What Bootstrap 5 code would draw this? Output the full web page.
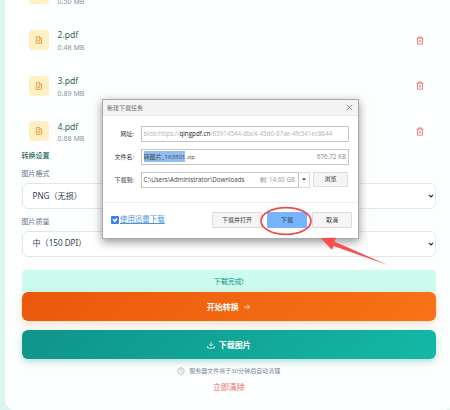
<!DOCTYPE html>
<html lang="zh-CN">
<head>
<meta charset="utf-8">
<meta name="viewport" content="width=device-width, initial-scale=1">
<title>PDF 转图片</title>
<link rel="stylesheet" href="https://cdn.jsdelivr.net/npm/bootstrap@5.3.0/dist/css/bootstrap.min.css">
<style>
html,body{height:410px;overflow:hidden}
body{background:#dcf5f0;font-family:"Noto Sans","Noto Sans CJK SC",sans-serif;font-size:8px;line-height:1;color:#334155}
.panel{margin-left:5px;width:455px;height:410px;background:#fdfffe;border-radius:0 0 18px 10px;padding:0 24px 0 16.5px;overflow:hidden}
.files{height:154px;justify-content:flex-end}
.file-row{height:45.6px;flex:none;padding:0 12px 0 7.5px}
.file-ico{width:20px;height:20px;border-radius:4px;background:#fef0c3}
.file-text{margin-left:8.5px;padding-top:1.4px}
.file-name{font-size:8.6px;line-height:12px;color:#315f5a}
.file-size{font-size:7.1px;line-height:10px;color:#8792a8;margin-top:.6px}
.head{height:4px;font-size:7px;font-weight:500;color:#27685f;line-height:4px}
.lbl{font-size:7px;color:#64748b;line-height:10px}
.form-select.pick{height:26px;border:1px solid #dfe7f1;border-radius:6px;background:#fff;padding:0 1px 0 10px;font-size:8.1px;color:#334155}
.done{height:22px;background:#ccfbf0;border-radius:4px 4px 0 0;color:#14927f;font-size:7px}
.btn.act{--bs-btn-color:#fff;height:29px;border:0;border-radius:6px;padding:0;font-size:8px;font-weight:700;color:#fff}
.go{background:linear-gradient(135deg,#ea580c,#f97316);box-shadow:0 3px 9px rgba(249,115,22,.25)}
.get{background:linear-gradient(135deg,#0f9488,#14b8a6);box-shadow:0 3px 7px rgba(20,150,136,.3)}
.note{font-size:6px;color:#7c879c}
.clear{font-size:8px;color:#f26b6b}
.dlg{left:102px;top:99px;width:257px;height:140px;background:#fff;border:1px solid #a9abac;box-shadow:0 3px 9px rgba(0,0,0,.42);font-family:"Open Sans","Noto Sans CJK SC",sans-serif;font-size:6.3px;color:#444}
.dlg-top{height:16px;background:#f4f4f4;border-bottom:1px solid #eaeaea;padding:0 5px 0 4px;color:#666;font-size:6px}
.dlg-body{height:87px;padding:10px 9px 0 0;border-bottom:1px solid #ececec}
.dlg-line{height:15.5px;margin-bottom:7.5px}
.cap{width:31px;margin-right:6.5px;text-align:right;font-size:6px;white-space:nowrap;color:#333}
.fld{height:15.5px;border:1px solid #c6c6c6;padding:0 2px;white-space:nowrap}
.sel{background:#8fbdf4;padding:1px 0}
.btn.mini{height:16px;border:1px solid #dcdcdc;border-radius:1px;background:#f5f5f5;padding:0;font-size:6px;color:#333}
.btn.mini.main{background:#78b4fd;border-color:#78b4fd}
.drop{width:10.5px;height:15.5px;border:1px solid #ddd;border-left:0}
.dlg-foot{height:34px;padding:0 6px 0 8px}
.thunder{color:#4a96d9;text-decoration:underline;font-size:7.45px;margin-left:1px}
.marks{left:0;top:0;pointer-events:none}
</style>
<script src="https://cdn.jsdelivr.net/npm/bootstrap@5.3.0/dist/js/bootstrap.bundle.min.js"></script>
</head>
<body class="position-relative">
<svg class="d-none">
 <symbol id="doc" viewBox="0 0 8 8"><path d="M1.3.6h3.3l2 2v4.8H1.3zM4.5.7v2.1h2M2.6 4.2h2.7M2.6 5.7h2.7M2.6 2.7h.8" fill="none" stroke="#e19432" stroke-width=".8" stroke-linejoin="round"/></symbol>
 <symbol id="bin" viewBox="0 0 8 9"><path d="M.5 2.2h7M2.6 2.2V.9h2.8v1.3M1.5 2.2v6h5v-6M3.3 4.2v2.2M4.7 4.2v2.2" fill="none" stroke="#f37575" stroke-width=".9" stroke-linejoin="round"/></symbol>
 <symbol id="chev" viewBox="0 0 6 4"><path d="M1 .9l2 2 2-2" fill="none" stroke="#222" stroke-width="1.1"/></symbol>
</svg>

<main class="panel">
 <section class="files d-flex flex-column">
  <div class="file-row d-flex align-items-center"><span class="file-ico d-flex align-items-center justify-content-center"><svg width="8" height="8"><use href="#doc"/></svg></span><div class="file-text flex-grow-1"><div class="file-name">1.pdf</div><div class="file-size">0.50 MB</div></div><svg width="8" height="9"><use href="#bin"/></svg></div>
  <div class="file-row d-flex align-items-center"><span class="file-ico d-flex align-items-center justify-content-center"><svg width="8" height="8"><use href="#doc"/></svg></span><div class="file-text flex-grow-1"><div class="file-name">2.pdf</div><div class="file-size">0.48 MB</div></div><svg width="8" height="9"><use href="#bin"/></svg></div>
  <div class="file-row d-flex align-items-center"><span class="file-ico d-flex align-items-center justify-content-center"><svg width="8" height="8"><use href="#doc"/></svg></span><div class="file-text flex-grow-1"><div class="file-name">3.pdf</div><div class="file-size">0.89 MB</div></div><svg width="8" height="9"><use href="#bin"/></svg></div>
  <div class="file-row d-flex align-items-center"><span class="file-ico d-flex align-items-center justify-content-center"><svg width="8" height="8"><use href="#doc"/></svg></span><div class="file-text flex-grow-1"><div class="file-name">4.pdf</div><div class="file-size">0.68 MB</div></div><svg width="8" height="9"><use href="#bin"/></svg></div>
 </section>
 <div class="head">转换设置</div>
 <div class="lbl" style="margin:11px 0 4px">图片格式</div>
 <div class="form-select pick d-flex align-items-center justify-content-between"><span>PNG（无损）</span><svg width="6" height="4"><use href="#chev"/></svg></div>
 <div class="lbl" style="margin:7.5px 0 4px">图片质量</div>
 <div class="form-select pick d-flex align-items-center justify-content-between"><span>中（150 DPI）</span><svg width="6" height="4"><use href="#chev"/></svg></div>
 <div class="done d-flex align-items-center justify-content-center" style="margin-top:13.5px">下载完成!</div>
 <button class="btn act go w-100 d-flex align-items-center justify-content-center">开始转换<svg class="ms-1" width="8" height="8" viewBox="0 0 8 8"><path d="M1 4h5.5M4.3 1.7L6.6 4 4.3 6.3" fill="none" stroke="#fff" stroke-width=".8"/></svg></button>
 <button class="btn act get w-100 d-flex align-items-center justify-content-center" style="margin-top:9px"><svg class="me-1" width="8" height="8" viewBox="0 0 8 8"><path d="M4 .7v4M2.3 3.2L4 4.9l1.7-1.7M.7 4.9v2.2h6.6V4.9" fill="none" stroke="#fff" stroke-width=".75"/></svg>下载图片</button>
 <div class="note d-flex align-items-center justify-content-center" style="margin-top:7px;height:9px"><svg class="me-1" width="8" height="8" viewBox="0 0 8 8" fill="none" stroke="#929cad" stroke-width=".6"><circle cx="4" cy="4" r="3.2"/><path d="M4 2v2.1l1.4.7"/></svg>服务器文件将于30分钟后自动清理</div>
 <div class="clear text-center" style="margin-top:8px">立即清除</div>
</main>

<div class="dlg position-absolute">
 <div class="dlg-top d-flex align-items-center justify-content-between"><span>新建下载任务</span><svg width="7" height="7" viewBox="0 0 7 7"><path d="M.8.8l5.4 5.4M6.2.8L.8 6.2" stroke="#777" stroke-width=".8"/></svg></div>
 <div class="dlg-body">
  <div class="dlg-line d-flex align-items-center"><span class="cap">网址:</span><div class="fld flex-grow-1 d-flex align-items-center" style="color:#b4b4b4"><span style="font-size:6.25px">blob:https://<span style="color:#222">qingpdf.cn</span>/65914544-dbc4-45d0-87ae-4fc541ec8644</span></div></div>
  <div class="dlg-line d-flex align-items-center"><span class="cap">文件名:</span><div class="fld flex-grow-1 d-flex align-items-center justify-content-between"><span style="font-size:6.1px"><span class="sel">转图片_163501</span>.zip</span><span style="color:#888">676.72 KB</span></div></div>
  <div class="dlg-line d-flex align-items-center"><span class="cap">下载到:</span><div class="fld flex-grow-1 d-flex align-items-center justify-content-between" style="padding-right:3px"><span style="font-size:6.2px">C:\Users\Administrator\Downloads</span><span style="color:#999;font-size:6.2px">剩: 14.60 GB</span></div><div class="drop d-flex align-items-center justify-content-center"><svg width="4" height="3" viewBox="0 0 4 3"><path d="M0 .4h4l-2 2.2z" fill="#222"/></svg></div><button class="btn mini" style="width:35px;margin-left:3.5px;margin-right:1px;height:15px">浏览</button></div>
 </div>
 <div class="dlg-foot d-flex align-items-center"><svg width="8" height="8" viewBox="0 0 8 8"><rect width="8" height="8" rx="1" fill="#3b82f0"/><path d="M1.2 2.8l2.2.7 3.2-1.7-.9 2.7L3.6 6.4z" fill="#fff"/></svg><span class="thunder">使用迅雷下载</span><button class="btn mini ms-auto" style="width:50px">下载并打开</button><button class="btn mini main" style="width:40px;margin-left:5px">下载</button><button class="btn mini" style="width:40px;margin-left:5px">取消</button></div>
</div>
<svg class="marks position-absolute" width="450" height="410"><ellipse cx="286" cy="221" rx="25" ry="13.3" fill="none" stroke="#f04b4d" stroke-width="1.7"/><path d="M320.5 238l15.5-.3-1.3 4 53 23.2-54-18.8-1.8 3.6z" fill="#f84e4e"/></svg>
</body>
</html>
